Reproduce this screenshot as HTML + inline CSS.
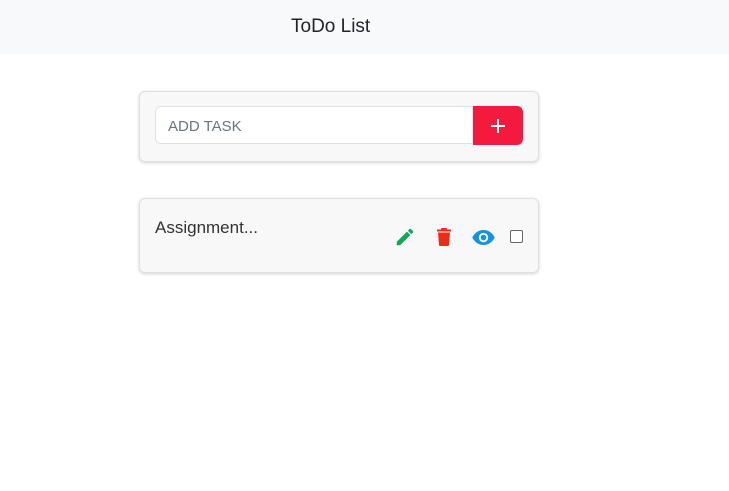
<!DOCTYPE html>
<html><head><style>
body{margin:0;width:729px;height:491px;background:#fff;font-family:"Liberation Sans",sans-serif;position:relative;overflow:hidden}
.nav{position:absolute;left:0;top:0;width:729px;height:54px;background:#f8f9fa}
.nav span{position:absolute;left:291px;top:16px;font-size:19px;color:#212529}
.card{position:absolute;left:139px;width:398px;background:#f8f8f8;border:1px solid #e0e0e0;border-radius:6px;box-shadow:0 1px 3px rgba(0,0,0,.18)}
.c1{top:91px;height:69px}
.c2{top:198px;height:73px}
.inp{position:absolute;left:15px;top:14px;width:318px;height:38px;background:#fff;border:1px solid #dee2e6;border-radius:6px 0 0 6px;box-sizing:border-box;font-size:15px;color:#6c757d;padding:11px 12px}
.btn{position:absolute;left:333px;top:14px;width:50px;height:39px;background:#f31a3d;border-radius:0 6px 6px 0}
.t{position:absolute;left:15px;top:19px;font-size:17px;color:#333}
svg{position:absolute}
.cb{position:absolute;left:370px;top:31px;width:11px;height:11px;border:1px solid #666;border-radius:2px;background:#fff}
</style></head><body>
<div class="nav"><span>ToDo List</span></div>
<div class="card c1"><div class="inp">ADD TASK</div><div class="btn">
<svg style="left:17px;top:12px" width="16" height="16" viewBox="0 0 16 16"><path d="M8 1v14M1 8h14" stroke="#fff" stroke-width="2"/></svg></div></div>
<div class="card c2"><div class="t">Assignment...</div>
<svg style="left:254px;top:27px" width="22" height="22" viewBox="0 0 24 24"><path fill="#11a85a" d="M3 17.25V21h3.75L17.81 9.94l-3.75-3.75L3 17.25zM20.71 7.04a1 1 0 0 0 0-1.41l-2.34-2.34a1 1 0 0 0-1.41 0l-1.83 1.83 3.75 3.75 1.83-1.83z"/></svg>
<svg style="left:296px;top:29px" width="16" height="18" viewBox="0 0 16 18"><path fill="#f02a1a" d="M5.5 0h5l.7 1.5H15v2H1v-2h3.8zM2 4.5h12l-1 12.5c0 .6-.4 1-1 1H4c-.6 0-1-.4-1-1z"/></svg>
<svg style="left:332px;top:31px" width="23" height="15" viewBox="0 0 24 16"><path fill="#1593e0" d="M12 0C6 0 2 4 0 8c2 4 6 8 12 8s10-4 12-8C22 4 18 0 12 0zm0 13a5 5 0 1 1 0-10 5 5 0 0 1 0 10zm0-8a3 3 0 1 0 0 6 3 3 0 0 0 0-6z"/></svg>
<div class="cb"></div></div>
</body></html>
